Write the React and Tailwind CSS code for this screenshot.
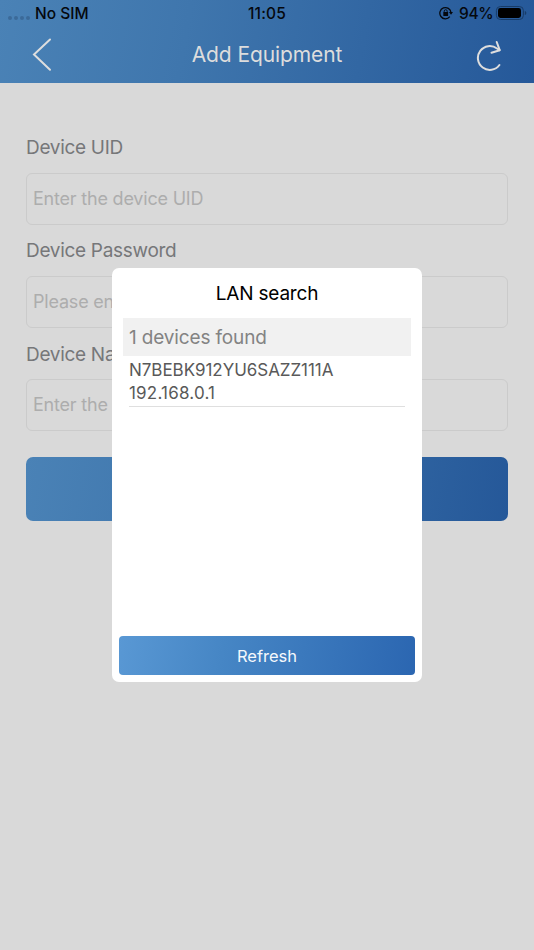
function StatusBar() {
  return (
    <div className="relative flex h-[26px] items-center justify-between pl-2 pr-[7px] pt-px text-[15.5px] font-medium text-[#05080d]">
      <div className="flex items-center">
        <span className="mr-[5px] mt-[8px] flex gap-[2px]">
          {[0, 1, 2, 3].map((i) => (
            <i key={i} className="size-1 rounded-full bg-[#3b6a99]" />
          ))}
        </span>
        <span>No SIM</span>
      </div>
      <span className="absolute inset-x-0 text-center tracking-[0.2px]">11:05</span>
      <div className="flex items-center">
        <svg width="14" height="14" viewBox="0 0 14 14" fill="none" className="mb-px mr-[6px]">
          <path d="M10.800 10.700A5.600 5.600 0 1 1 12 6.600" stroke="currentColor" strokeWidth="1.300" />
          <path d="M9.900 5.900h4.100L12 8.700z" fill="currentColor" />
          <rect x="4.300" y="6.100" width="4.800" height="3.900" rx=".5" fill="currentColor" />
          <path d="M5.200 6.300V5.200a1.500 1.500 0 0 1 3 0v1.100" stroke="currentColor" strokeWidth=".9" />
        </svg>
        <span className="tracking-[-0.25px]">94%</span>
        <svg width="32" height="16" viewBox="0 0 32 16" fill="none" className="mb-[2px] ml-[1.500px]">
          <rect x="1.400" y="1.500" width="27" height="13" rx="4" stroke="#183c68" />
          <rect x="3" y="3.100" width="23" height="9.800" rx="2.400" fill="#000" />
          <path d="M29.800 6v4c1-.4 1.500-1.100 1.500-2s-.5-1.600-1.500-2z" fill="#183c68" />
        </svg>
      </div>
    </div>
  );
}

function Field({ label, placeholder }) {
  return (
    <div className="h-[103.200px]">
      <div className="h-[38px] pt-[1.200px] text-[19px] leading-6 tracking-[-0.3px] text-[#767779]">{label}</div>
      <div className="flex h-[52px] items-center rounded-md border border-[#cbcbcb] px-[6px] pb-[2px] text-[18px] tracking-[-0.2px] text-[#adadad]">
        {placeholder}
      </div>
    </div>
  );
}

export default function App() {
  return (
    <div className="relative h-[950px] w-[534px] overflow-hidden whitespace-nowrap bg-[#d9d9d9] font-['Inter',sans-serif]">
      <header className="h-[83px] bg-linear-[100deg,#4a82b6,#3f76ad_35%,#255899]">
        <StatusBar />
        <div className="flex h-[57px] items-center justify-between px-[32px]">
          <svg width="20" height="34" viewBox="0 0 20 34" fill="none" stroke="#dedede" strokeWidth="2" strokeLinecap="round">
            <path d="M18 1.500 2 16.500 18 31.800" />
          </svg>
          <h1 className="ml-[6px] text-[21px] tracking-[-0.1px] text-[#dddddd]">Add Equipment</h1>
          <svg width="26" height="32" viewBox="0 0 26 32" fill="none" stroke="#dedede" strokeWidth="2" strokeLinecap="round" strokeLinejoin="round">
            <path d="M23.400 26A11.900 11.900 0 1 1 21 9.500L23.500 11.200" />
            <path d="M20.700 3 23.700 11.200 15.500 13.700" />
          </svg>
        </div>
      </header>
      <main className="px-[26px] pt-[52px]">
        <Field label="Device UID" placeholder="Enter the device UID" />
        <Field label="Device Password" placeholder="Please enter" />
        <Field label="Device Name" placeholder="Enter the" />
        <div className="mt-[12px] h-[64px] rounded-[7px] bg-linear-[100deg,#4a82b6,#3f76ad_35%,#255899]" />
      </main>
      <section className="absolute left-[112px] top-[268px] flex h-[413.500px] w-[310px] flex-col rounded-[7px] bg-white">
        <h2 className="h-[50px] pt-[2px] text-center text-[19px] leading-[48px] tracking-[-0.2px] text-black">LAN search</h2>
        <div className="mx-[11px] h-[38px] bg-[#f1f1f1] pl-[6px] pt-px text-[19px] leading-[38px] tracking-[-0.15px] text-[#838383]">1 devices found</div>
        <div className="mx-[17px] h-[51px] border-b border-[#dfdfdf] pt-[3px] text-[17px] leading-[23px] text-[#595959]">
          <div className="tracking-[-0.05px]">N7BEBK912YU6SAZZ111A</div>
          <div className="tracking-[0.2px]">192.168.0.1</div>
        </div>
        <button className="mx-[7px] mb-[7px] mt-auto h-[38.500px] rounded-[4px] bg-linear-[100deg,#5998d4,#4686c5_35%,#2b66b1] pt-[2px] text-[16.500px] text-[#f4f8fc]">Refresh</button>
      </section>
    </div>
  );
}
